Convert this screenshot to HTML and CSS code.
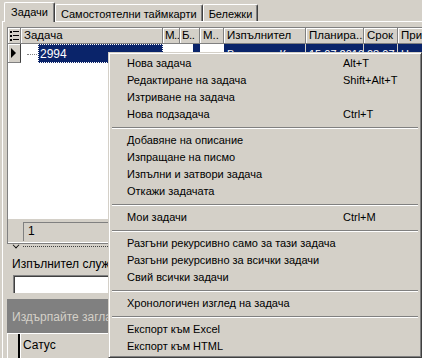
FILE: index.html
```html
<!DOCTYPE html>
<html lang="bg">

<head>
    <meta charset="UTF-8">
    <meta name="viewport" content="width=device-width, initial-scale=1.0">
    <title>Задачи</title>
    <link rel="stylesheet" href="styles.css">
</head>

<body>
    <div class="window">
        <div class="tabs">
            <div class="tab active">Задачи</div>
            <div class="tab">Самостоятелни таймкарти</div>
            <div class="tab">Бележки</div>
        </div>

        <div class="page">
            <div class="grid">
                <div class="cols grid-head">
                    <div class="hcell ind">
                        <svg width="9" height="10" viewBox="0 0 9 10">
                            <rect x="0" y="0" width="2" height="2" fill="#000" />
                            <rect x="3" y="0" width="6" height="1" fill="#000" />
                            <rect x="0" y="4" width="2" height="2" fill="#000" />
                            <rect x="3" y="4" width="6" height="1" fill="#000" />
                            <rect x="0" y="8" width="2" height="2" fill="#000" />
                            <rect x="3" y="8" width="6" height="1" fill="#000" />
                        </svg>
                    </div>
                    <div class="hcell">Задача</div>
                    <div class="hcell narrow">М..</div>
                    <div class="hcell narrow">Б..</div>
                    <div class="hcell">М..</div>
                    <div class="hcell">Изпълнител</div>
                    <div class="hcell">Планира...</div>
                    <div class="hcell">Срок</div>
                    <div class="hcell">При</div>
                </div>

                <div class="cols grid-row">
                    <div class="hcell ind"><span class="arrow"></span></div>
                    <div class="cell task">
                        <span class="tree-line"></span>
                        <span class="focus">2994</span>
                    </div>
                    <div class="cell"></div>
                    <div class="cell num"><span class="sel">0</span></div>
                    <div class="cell"></div>
                    <div class="cell sel">Валентин Коев</div>
                    <div class="cell sel">15.07.2010</div>
                    <div class="cell sel">08:07</div>
                    <div class="cell sel">Нормален</div>
                </div>

                <div class="grid-fill"></div>

                <div class="grid-foot">
                    <div class="foot-ind"></div>
                    <div class="count">1</div>
                </div>
            </div>

            <div class="splitter">
                <span class="chevron"></span>
                <span class="dots"></span>
            </div>

            <div class="filter">
                <div class="filter-label">Изпълнител служител:</div>
                <div class="filter-input"></div>
            </div>

            <div class="group-panel">Издърпайте заглавие на колона тук, за да групирате по нея</div>

            <div class="sub-head">
                <div class="sub-ind"></div>
                <div class="sub-cell">Сатус</div>
            </div>
        </div>

        <div class="menu">
            <div class="item"><span>Нова задача</span><span>Alt+T</span></div>
            <div class="item"><span>Редактиране на задача</span><span>Shift+Alt+T</span></div>
            <div class="item"><span>Изтриване на задача</span><span></span></div>
            <div class="item"><span>Нова подзадача</span><span>Ctrl+T</span></div>
            <div class="sep"></div>
            <div class="item"><span>Добавяне на описание</span><span></span></div>
            <div class="item"><span>Изпращане на писмо</span><span></span></div>
            <div class="item"><span>Изпълни и затвори задача</span><span></span></div>
            <div class="item"><span>Откажи задачата</span><span></span></div>
            <div class="sep"></div>
            <div class="item"><span>Мои задачи</span><span>Ctrl+M</span></div>
            <div class="sep"></div>
            <div class="item"><span>Разгъни рекурсивно само за тази задача</span><span></span></div>
            <div class="item"><span>Разгъни рекурсивно за всички задачи</span><span></span></div>
            <div class="item"><span>Свий всички задачи</span><span></span></div>
            <div class="sep"></div>
            <div class="item"><span>Хронологичен изглед на задача</span><span></span></div>
            <div class="sep"></div>
            <div class="item"><span>Експорт към Excel</span><span></span></div>
            <div class="item"><span>Експорт към HTML</span><span></span></div>
        </div>
    </div>
</body>

</html>
```

FILE: styles.css
```css
* {
    box-sizing: border-box;
}

body {
    margin: 0;
    padding: 0;
    background-color: #d4d0c8;
    font-family: "Liberation Sans", Arial, sans-serif;
    font-size: 11px;
    color: #000;
}

.window {
    position: relative;
    width: 422px;
    height: 358px;
    overflow: hidden;
}

/* tabs */

.tabs {
    display: flex;
    align-items: flex-end;
    height: 21px;
    padding-left: 4px;
}

.tab {
    height: 17px;
    line-height: 18px;
    padding: 0 5px;
    border-top: 1px solid #fff;
    border-left: 1px solid #fff;
    border-right: 1px solid #404040;
    box-shadow: inset -1px 0 #808080;
    border-radius: 2px 2px 0 0;
    white-space: nowrap;
}

.tab.active {
    height: 20px;
    line-height: 19px;
    padding: 0 6px;
    margin-bottom: -1px;
    position: relative;
    background-color: #d4d0c8;
}

.page {
    height: 337px;
    margin-left: 2px;
    border-top: 1px solid #fff;
    border-left: 1px solid #fff;
    padding: 5px 0 0 4px;
}

/* main grid */

.grid {
    height: 216px;
    border-top: 1px solid #808080;
    border-left: 1px solid #808080;
    display: flex;
    flex-direction: column;
    background-color: #fff;
}

.cols {
    display: grid;
    grid-template-columns: 13px 142px 17px 20px 24px 82px 58px 34px 62px;
}

.grid-head {
    height: 16px;
}

.hcell {
    background-color: #d4d0c8;
    border-right: 1px solid #808080;
    border-bottom: 1px solid #808080;
    box-shadow: inset 1px 1px #fff;
    padding-left: 3px;
    line-height: 15px;
    font-size: 11.5px;
    white-space: nowrap;
    overflow: hidden;
}

.hcell.narrow {
    padding-left: 2px;
    letter-spacing: -0.5px;
}

.hcell.ind {
    padding-left: 2px;
    display: flex;
    align-items: center;
}

.grid-row {
    height: 19px;
}

.grid-row .ind {
    border-right-color: #404040;
}

.arrow {
    width: 0;
    height: 0;
    border-top: 5px solid transparent;
    border-bottom: 5px solid transparent;
    border-left: 5px solid #000;
    margin-left: 1px;
}

.cell {
    font-size: 11px;
    line-height: 17px;
    padding: 2px 0 0 3px;
    white-space: nowrap;
    overflow: hidden;
}

.cell.sel {
    background-color: #0a246a;
    color: #fff;
    border-right: 1px solid #d4d0c8;
}

.task {
    display: flex;
    align-items: center;
    padding: 0;
}

.tree-line {
    width: 10px;
    margin: 2px 1px 0 6px;
    border-top: 1px dotted #808080;
}

.focus {
    flex: 1;
    height: 19px;
    padding: 2px 0 0 2px;
    background-color: #0a246a;
    color: #fff;
    font-size: 12px;
    outline: 1px dotted #fff;
    outline-offset: -1px;
}

.num {
    text-align: right;
    padding: 0;
}

.num .sel {
    display: inline-block;
    width: 7px;
    height: 19px;
    background-color: #0a246a;
    color: #0a246a;
}

.grid-fill {
    flex: 1;
}

.grid-foot {
    height: 24px;
    display: flex;
    background-color: #d4d0c8;
    border-bottom: 1px solid #fff;
    padding: 3px 0 1px;
}

.foot-ind {
    width: 15px;
}

.count {
    flex: 1;
    border-top: 1px solid #808080;
    border-left: 1px solid #808080;
    padding-left: 4px;
    line-height: 17px;
    font-size: 12px;
}

/* splitter and filter */

.splitter {
    height: 6px;
    display: flex;
    align-items: center;
    padding-left: 6px;
    border-top: 1px solid #808080;
}

.chevron {
    width: 6px;
    height: 6px;
    border-right: 1px solid #000;
    border-bottom: 1px solid #000;
    transform: translateY(-2px) rotate(45deg) scale(0.8);
}

.dots {
    flex: 1;
    margin-left: 4px;
    border-top: 1px dotted #404040;
}

.filter {
    height: 50px;
    padding: 8px 0 0 5px;
}

.filter-label {
    font-size: 12px;
    line-height: 15px;
    white-space: nowrap;
}

.filter-input {
    height: 18px;
    margin: 3px 0 0 1px;
    background-color: #fff;
    border-top: 1px solid #808080;
    border-left: 1px solid #808080;
    box-shadow: inset 1px 1px #404040;
}

.group-panel {
    height: 34px;
    background-color: #808080;
    color: #d4d0c8;
    font-size: 12px;
    line-height: 36px;
    padding-left: 5px;
    white-space: nowrap;
    overflow: hidden;
}

.sub-head {
    display: flex;
    height: 26px;
    border-top: 1px solid #fff;
}

.sub-ind {
    width: 13px;
    border-right: 2px solid #000;
    box-shadow: inset 1px 0 #fff;
}

.sub-cell {
    flex: 1;
    padding-left: 3px;
    font-size: 12px;
    line-height: 22px;
    box-shadow: inset 1px 0 #fff;
}

/* context menu */

.menu {
    position: absolute;
    left: 108px;
    top: 52px;
    width: 314px;
    padding: 2px;
    background-color: #d4d0c8;
    border: 1px solid;
    border-color: #d4d0c8 #404040 #404040 #d4d0c8;
    box-shadow: inset 1px 1px #fff, inset -1px -1px #808080;
}

.item {
    display: grid;
    grid-template-columns: 216px auto;
    height: 17px;
    line-height: 17px;
    padding-left: 16px;
    white-space: nowrap;
}

.sep {
    height: 9px;
    margin: 0 1px;
    padding-top: 4px;
}

.sep::before {
    content: "";
    display: block;
    border-top: 1px solid #808080;
    border-bottom: 1px solid #fff;
}
```
